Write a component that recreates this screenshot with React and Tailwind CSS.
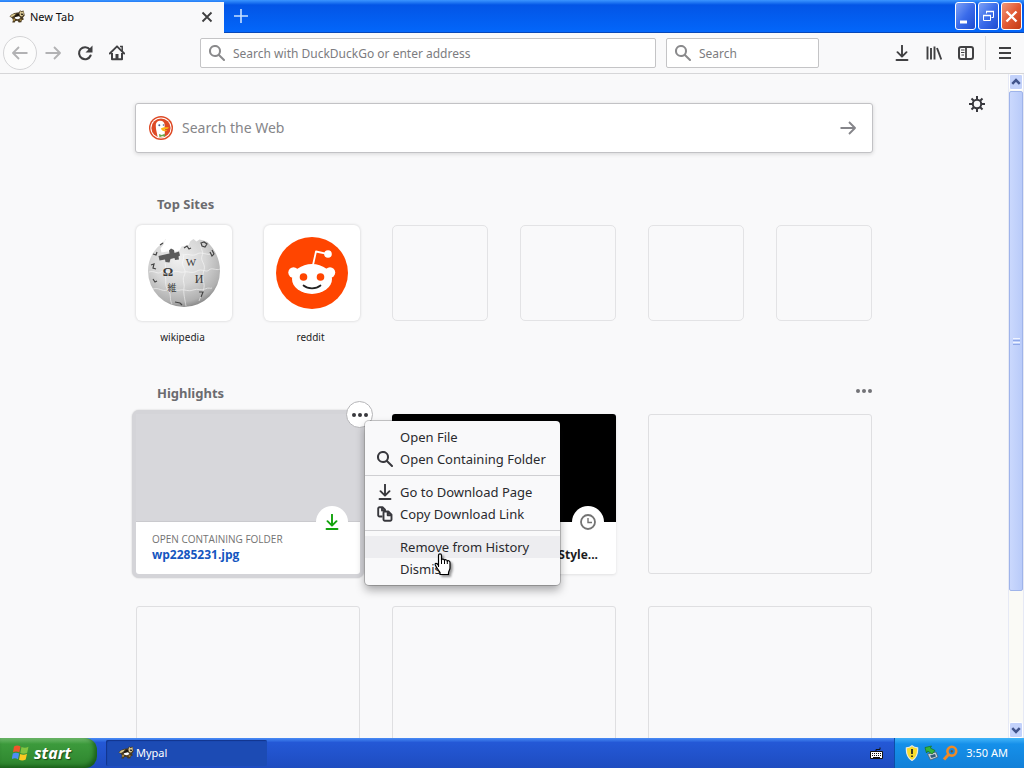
import React from "react";

function Svg({ size = 16, className = "", children, box = 16 }) {
  return (
    <svg width={size} height={size} viewBox={`0 0 ${box} ${box}`} className={`block shrink-0 ${className}`} fill="none" aria-hidden="true">
      {children}
    </svg>
  );
}

function SearchIcon({ className }) {
  return (
    <Svg className={className}>
      <path fill="currentColor" d="M15.707 14.293l-4.822-4.822a6.019 6.019 0 1 0-1.414 1.414l4.822 4.822a1 1 0 0 0 1.414-1.414zM6 10a4 4 0 1 1 4-4 4 4 0 0 1-4 4z" />
    </Svg>
  );
}

function ArrowIcon({ className }) {
  return (
    <Svg className={className}>
      <path d="M0.5 8H15M9 2l6 6-6 6" stroke="currentColor" strokeWidth="1.8" strokeLinejoin="round" />
    </Svg>
  );
}

function DownloadIcon({ className, size = 16 }) {
  return (
    <Svg className={className} size={size}>
      <path d="M8 0.5v11M3.500 7.200l4.500 4.500 4.500-4.500" stroke="currentColor" strokeWidth="1.900" strokeLinejoin="round" strokeLinecap="round" />
      <path d="M2.500 15h11" stroke="currentColor" strokeWidth="1.900" strokeLinecap="round" />
    </Svg>
  );
}

function CopyIcon({ className }) {
  return (
    <Svg className={className}>
      <path d="M5.500 10.500H2.500A1.300 1.300 0 0 1 1.200 9.200V2.500A1.300 1.300 0 0 1 2.500 1.200H5.500L8 3.700V5M5 1.200V4.500H8" stroke="currentColor" strokeWidth="1.900" strokeLinejoin="round" />
      <path d="M7.800 5.500H11.300L14.500 8.700V13.500a1.300 1.300 0 0 1-1.300 1.300H7.800a1.300 1.300 0 0 1-1.300-1.300V6.800A1.300 1.300 0 0 1 7.800 5.500zM10.700 5.500V9.300H14.500" stroke="currentColor" strokeWidth="1.900" strokeLinejoin="round" />
    </Svg>
  );
}

function DotsIcon({ className }) {
  return (
    <Svg className={className}>
      <circle cx="2" cy="8" r="2" fill="currentColor" />
      <circle cx="8" cy="8" r="2" fill="currentColor" />
      <circle cx="14" cy="8" r="2" fill="currentColor" />
    </Svg>
  );
}

function MypalIcon() {
  return (
    <Svg>
      <path d="M0.500 7.500L2.500 5.500l3-1.500 4.500-.8 1.200-2 1 1 2.300-.700.700 2.500 0.500 2.500-1.700 2 .8 2-2 .800-.4 2-2.600.200-1.300-1.700-2 .200-.8 1.500H3.300l.7-2.500-1-2z" fill="#4a3b22" />
      <path d="M1 7.500L3.200 5.600 7 4.600 5.500 6.600 3 8z" fill="#d6c68c" />
      <path d="M5.500 7l3-2.300L11 5 9.500 7 6.500 8z" fill="#1a150e" />
      <path d="M11.200 2l1.300 1.300 2-1 .3 3.200-1.800 2-1.800-.5-.8-2z" fill="#dfcd98" />
      <path d="M5.800 8.300L10 7.300l1.500 1.700-2.500 1.200-2.700-.5z" fill="#fff" />
      <path d="M11.800 4.500l2.500.300-.500 1.200-1.800-.2z" fill="#1a150e" />
      <path d="M4 10l2-.500v2l-1.600.7zM10.500 10.500l2-.5-.2 1.800-1.300.2z" fill="#a88942" />
    </Svg>
  );
}

function DuckIcon() {
  return (
    <Svg size={24} box={24}>
      <circle cx="12" cy="12" r="12" fill="#de4a26" />
      <circle cx="12" cy="12" r="10.600" fill="#fff" />
      <circle cx="12" cy="12" r="9.600" fill="#de4a26" />
      <path d="M8.600 20.900C8 17 6.800 13.500 6.800 10c-.3-3 1.200-4.700 3.700-5.200 3-.4 5.300 1.400 5.200 4.700-.1 2.200-.3 3.500.2 6.500l-.5 4.500a9.600 9.600 0 0 1-6.800.4z" fill="#fff" />
      <path d="M12 12.300c1.800-1.200 5-1.500 8-.8-1 1.700-3.500 1.500-5 2 1.200.9 2.600.9 3.400.8-1.400 1.700-6.200 1.500-6.400-2z" fill="#fdb515" />
      <path d="M10 18l2.800 1 2.900-1.200.4 2.600-2.900-.2-2.800 1z" fill="#6aa84a" />
      <circle cx="10.300" cy="9.300" r="1" fill="#4a5f8e" />
      <circle cx="14.500" cy="9" r=".8" fill="#4a5f8e" />
    </Svg>
  );
}

function WikipediaLogo() {
  return (
    <Svg size={74} box={74}>
      <defs>
        <radialGradient id="globe" cx="42%" cy="30%" r="74%">
          <stop offset="0" stopColor="#f0f0f0" />
          <stop offset=".5" stopColor="#d6d6d6" />
          <stop offset=".85" stopColor="#b0b0b0" />
          <stop offset="1" stopColor="#7c7c7c" />
        </radialGradient>
      </defs>
      <path d="M19 3.500l-6.500 6C5 16 1 25 1 35a36 36 0 0 0 72 0c0-12-5-21.500-12.500-29l-4-1.500-4-1-3 2-3-2.500-3 2-2 4-7 1.500-2 4-6 1.500-6-.5-6 1-1-4 3-4 1.500-5z" fill="url(#globe)" />
      <path d="M11.500 20l8.500-2 2.500-.5-.5-3 2-2 3 1.500.5 3L32 15.500l1 4-1.500 1 .5 3-4 .5-.5-2-4 1-1 3.500-4-.5-.5-2.500-5.500 1z" fill="#5c5c5c" />
      <g stroke="#fff" strokeWidth=".8" opacity=".65">
        <path d="M36 18c2 5-2 8 0 12s3 6 1 10 1 8 0 12 1 12 2 18" />
        <path d="M2 36c6-2 8 3 12 0s8 2 12 0 7 1 11 0 8 2 13-1 9 2 12-1 7 1 11-1" />
        <path d="M6 53c6-2 9 3 14 1s8 1 13 0 8 2 13 0 8 1 12-1 5 0 7-1" />
        <path d="M18 27c2 6-2 8 0 13s-1 9 3 14 1 9 4 14M54 8c-1 5 3 7 1 12s4 8 2 14-1 9 0 14-3 11-5 17" />
        <path d="M37 19c5-2 8 2 13-1s9 2 18 0" />
      </g>
      <g fill="#3a3a3a" fontFamily="Liberation Serif, serif" textAnchor="middle">
        <text x="21" y="40" fontSize="13" fontWeight="700">Ω</text>
        <text x="44" y="30" fontSize="11">W</text>
        <text x="52" y="47" fontSize="12">И</text>
        <text x="25" y="55" fontSize="9" fontFamily="Noto Sans CJK JP, sans-serif">維</text>
      </g>
      <g stroke="#444" strokeWidth="1.200">
        <path d="M37 12l3-2 2 3 2-1M54 7l3-1 3 2-2 3-3-1zM63 16l2 4 2-2-2-4M4 29l3-1-1 4 3 1M6 43l2 3 2-1M13 9l3-2M6 18l3 1 1-3M28 66l5 1 2 2M52 56h4l-2 5" />
      </g>
    </Svg>
  );
}

function RedditLogo() {
  return (
    <Svg size={72} box={72}>
      <circle cx="36" cy="36" r="36" fill="#ff4500" />
      <path d="M37 28l3-13.500 11 2.300" stroke="#fff" strokeWidth="1.800" strokeLinejoin="round" />
      <circle cx="52" cy="17" r="3.800" fill="#fff" />
      <circle cx="17.500" cy="35.500" r="5.200" fill="#fff" />
      <circle cx="54" cy="35.500" r="5.200" fill="#fff" />
      <ellipse cx="36" cy="42" rx="20" ry="15" fill="#fff" />
      <circle cx="27.500" cy="40" r="3.800" fill="#ff4500" />
      <circle cx="44.500" cy="40" r="3.800" fill="#ff4500" />
      <path d="M27.500 48.500c4.500 3.800 12.500 3.800 17 0" stroke="#222" strokeWidth="1.700" strokeLinecap="round" />
    </Svg>
  );
}

function TitleBar() {
  const frame = "flex h-7 w-[21px] items-center justify-center rounded-[3px] border border-white";
  return (
    <header className="flex h-[33px] shrink-0 items-start justify-between bg-linear-to-b from-[#3b95ff] via-[#0355e6] via-15% to-[#0367fb] shadow-[inset_0_-1px_0_#0747b8]">
      <div className="flex items-start pt-0.5">
        <div className="flex h-[31px] w-56 items-center bg-[#f9f9fa] pr-[11px] pb-px pl-[9px]">
          <MypalIcon />
          <span className="flex-1 pl-[5px] text-[11px] text-[#0c0c0d]">New Tab</span>
          <button aria-label="Close tab" className="text-[#3f3f40]">
            <Svg size={12}>
              <path d="M2 2l12 12M14 2L2 14" stroke="currentColor" strokeWidth="2.400" />
            </Svg>
          </button>
        </div>
        <button aria-label="New tab" className="flex h-7 w-[34px] items-center justify-center text-[#c8e0ff]">
          <Svg>
            <path d="M8 1v14M1 8h14" stroke="currentColor" strokeWidth="1.600" />
          </Svg>
        </button>
      </div>
      <div className="flex gap-0.5 pt-0.5 pr-0.5">
        <button aria-label="Minimize" className={`${frame} bg-linear-to-br from-[#7ea0f5] via-[#3a6bea] to-[#1c4bd0]`}>
          <Svg size={19} box={19}>
            <path d="M4 15h7" stroke="#fff" strokeWidth="3" />
          </Svg>
        </button>
        <button aria-label="Restore" className={`${frame} bg-linear-to-br from-[#7ea0f5] via-[#3a6bea] to-[#1c4bd0]`}>
          <Svg size={19} box={19}>
            <path d="M7.500 6.500V4.500h7v6h-2" stroke="#fff" />
            <path d="M7 4.500h8" stroke="#fff" strokeWidth="1.500" />
            <path d="M4.500 8.500h7v5h-7z" stroke="#fff" />
            <path d="M4 8.500h8" stroke="#fff" strokeWidth="1.500" />
          </Svg>
        </button>
        <button aria-label="Close" className={`${frame} bg-linear-to-br from-[#f0977a] via-[#e25a35] to-[#c23a12]`}>
          <Svg size={19} box={19}>
            <path d="M4.500 4.500l10 10M14.500 4.500l-10 10" stroke="#fff" strokeWidth="2.400" />
          </Svg>
        </button>
      </div>
    </header>
  );
}

function ToolbarField({ label, className }) {
  return (
    <label className={`flex h-[30px] items-center gap-2 rounded-xs border border-[#c4c4c6] bg-white px-2 ${className}`}>
      <SearchIcon className="text-[#8a8a8c]" />
      <input aria-label={label} placeholder={label} className="min-w-0 flex-1 bg-transparent pt-px text-xs text-[#0c0c0d] outline-none placeholder:text-[#7c7c80]" />
    </label>
  );
}

function Toolbar() {
  return (
    <nav className="flex h-[41px] shrink-0 items-center border-b border-[#d6d6d8] bg-[#f9f9fa] pr-[11px] pl-[3px] text-[#404042]">
      <button aria-label="Back" className="flex size-[34px] items-center justify-center rounded-full border border-[#d4d4d6] bg-[#fcfcfc] text-[#b2b2b4]">
        <ArrowIcon className="rotate-180" />
      </button>
      <div className="flex gap-4 pl-2">
        <button aria-label="Forward" className="text-[#b2b2b4]">
          <ArrowIcon />
        </button>
        <button aria-label="Reload">
          <Svg>
            <path d="M12.800 4.500A6 6 0 1 0 13.600 10.500" stroke="currentColor" strokeWidth="2.100" strokeLinecap="round" />
            <path d="M15.500 0.500v7h-7z" fill="currentColor" />
          </Svg>
        </button>
        <button aria-label="Home">
          <Svg>
            <path d="M0.800 8.500L8 1.300l7.200 7.200" stroke="currentColor" strokeWidth="1.800" strokeLinecap="round" strokeLinejoin="round" />
            <path d="M3 8v6.200h10V8" stroke="currentColor" strokeWidth="2" strokeLinejoin="round" />
            <path d="M6.500 9h3v5.500h-3z" fill="currentColor" />
            <path d="M11 1.500h2.200V6" stroke="currentColor" strokeWidth="1.500" />
          </Svg>
        </button>
      </div>
      <ToolbarField label="Search with DuckDuckGo or enter address" className="ml-[75px] flex-1" />
      <ToolbarField label="Search" className="mr-[75px] ml-2.5 w-[153px]" />
      <div className="flex gap-4">
        <button aria-label="Downloads">
          <DownloadIcon />
        </button>
        <button aria-label="Library">
          <Svg>
            <path d="M1.500 1.500v13M5 3v11.500M8.500 1.500v13" stroke="currentColor" strokeWidth="1.900" />
            <path d="M11 3l4.300 11.500" stroke="currentColor" strokeWidth="1.900" />
          </Svg>
        </button>
        <button aria-label="Sidebar">
          <Svg>
            <rect x="1" y="2" width="14" height="12" rx="2" stroke="currentColor" strokeWidth="2" />
            <path d="M8 2v12" stroke="currentColor" strokeWidth="1.800" />
            <path d="M3 5h3.500M3 7.500h3.500M3.500 10h2.500" stroke="currentColor" strokeWidth="1.100" />
          </Svg>
        </button>
      </div>
      <div className="ml-[11px] h-[34px] border-l border-[#dedee0]" />
      <button aria-label="Menu" className="ml-[11px]">
        <Svg>
          <path d="M2 3h12M2 8h12M2 13h12" stroke="currentColor" strokeWidth="2" />
        </Svg>
      </button>
    </nav>
  );
}

function HandCursor() {
  return (
    <svg width="18" height="23" viewBox="0 0 18 23" className="pointer-events-none absolute top-[132px] left-[69px] drop-shadow-[2px_2px_1px_rgba(0,0,0,0.400)]" aria-hidden="true">
      <path
        d="M4.500 13.500V2.500c0-2.300 3-2.300 3 0V7c0-1.300 3-1.300 3 .6 0-1.300 2.800-1.300 2.800.9 0-1.200 2.700-1.200 2.700 1V15c0 2-1.500 3-1.500 5v1.500H6V19.500c-1-2-3.200-4-4.700-7.500-.7-2 1.500-2.500 3.200.500z"
        fill="#fff"
        stroke="#000"
        strokeWidth="1.200"
        strokeLinejoin="round"
      />
      <path d="M7.500 6.500V11M10.500 7.500V11M13.300 8.500V11" stroke="#000" />
    </svg>
  );
}

function MenuItem({ icon, active, children }) {
  return (
    <button role="menuitem" className={`flex h-[22px] w-full items-center gap-[7px] px-3 text-left ${active ? "bg-[#ededf0]" : ""}`}>
      <span className="size-4 text-[#38383d]">{icon}</span>
      <span className="whitespace-nowrap">{children}</span>
    </button>
  );
}

function ContextMenu() {
  return (
    <div role="menu" className="absolute top-[7px] left-[229px] z-20 w-[195px] rounded-[4px] bg-[#f9f9fa] py-[5px] text-[13px] leading-[22px] text-[#2a2a2e] shadow-[0_0_0_1px_rgba(0,0,0,0.200),0_5px_10px_rgba(12,12,13,0.350)]">
      <MenuItem>Open File</MenuItem>
      <MenuItem icon={<SearchIcon />}>Open Containing Folder</MenuItem>
      <hr className="my-[5px] border-[#cfcfd2]" />
      <MenuItem icon={<DownloadIcon />}>Go to Download Page</MenuItem>
      <MenuItem icon={<CopyIcon />}>Copy Download Link</MenuItem>
      <hr className="my-[5px] border-[#cfcfd2]" />
      <MenuItem active>Remove from History</MenuItem>
      <MenuItem>Dismiss</MenuItem>
      <HandCursor />
    </div>
  );
}

function TopSites() {
  const sites = [
    { name: "wikipedia", logo: <WikipediaLogo /> },
    { name: "reddit", logo: <RedditLogo /> },
  ];
  return (
    <section className="mt-[41px]">
      <h2 className="pl-[21px] text-[13px] leading-5 font-bold text-[#6b6b6f]">Top Sites</h2>
      <div className="mt-[11px] grid grid-cols-6 gap-8">
        {sites.map((s) => (
          <a key={s.name} href={`#${s.name}`} className="text-center text-[10px] leading-4 text-[#1c1c1e]">
            <span className="flex h-24 items-center justify-center rounded-md bg-white shadow-[0_0_3px_rgba(12,12,13,0.180)]">{s.logo}</span>
            <span className="mt-2 block pr-[3px]">{s.name}</span>
          </a>
        ))}
        {[0, 1, 2, 3].map((i) => (
          <div key={i} className="h-24 rounded-[5px] border border-[#e3e3e5]" />
        ))}
      </div>
    </section>
  );
}

function CardBadge({ children }) {
  return <span className="absolute right-3 bottom-9 flex size-8 items-center justify-center rounded-full bg-white">{children}</span>;
}

function Highlights() {
  return (
    <section className="mt-[38px]">
      <div className="flex items-center justify-between pl-[21px]">
        <h2 className="text-[13px] leading-5 font-bold text-[#6b6b6f]">Highlights</h2>
        <button aria-label="Section options" className="pb-1 text-[#737377]">
          <DotsIcon />
        </button>
      </div>
      <div className="mt-[11px] grid grid-cols-3 gap-8">
        <article className="relative h-40 rounded-[3px] bg-white shadow-[0_0_0_4px_#d4d4d8,0_0_2px_4px_rgba(0,0,0,0.200)]">
          <div className="h-[108px] border-b border-[#cacace] bg-[#d7d7db]" />
          <CardBadge>
            <DownloadIcon className="text-[#12a30d]" />
          </CardBadge>
          <div className="px-4 pt-[9px]">
            <p className="font-['Open_Sans','Noto_Sans',sans-serif] text-[10px] leading-4 text-[#737373]">OPEN CONTAINING FOLDER</p>
            <a href="#file" className="block font-['Open_Sans','Noto_Sans',sans-serif] text-xs leading-4 font-bold text-[#1456c0]">
              wp2285231.jpg
            </a>
          </div>
          <button aria-label="Open menu" className="absolute -top-[13px] -right-[13px] flex size-[27px] items-center justify-center rounded-full border border-[#b5b5b8] bg-white text-[#38383d]">
            <DotsIcon />
          </button>
          <ContextMenu />
        </article>
        <article className="relative h-40 rounded-[3px] bg-white shadow-[0_1px_3px_rgba(12,12,13,0.100)]">
          <div className="h-[108px] rounded-t-[3px] bg-black" />
          <CardBadge>
            <Svg className="text-[#737373]">
              <circle cx="8" cy="8" r="7" stroke="currentColor" strokeWidth="1.800" />
              <path d="M8 4v4.500h4" stroke="currentColor" strokeWidth="1.400" />
            </Svg>
          </CardBadge>
          <a href="#visited" className="block pt-[25px] pr-[18px] text-right font-['Open_Sans','Noto_Sans',sans-serif] text-xs leading-4 font-bold text-[#1c1c1e]">
            Style...
          </a>
        </article>
        {[0, 1, 2, 3].map((i) => (
          <div key={i} className="h-40 rounded-[3px] border border-[#dfdfe1]" />
        ))}
      </div>
    </section>
  );
}

function Scrollbar() {
  const arrow = "flex h-4 w-full items-center justify-center rounded-[2px] border border-white bg-[#c3d2fb] text-[#41548c]";
  return (
    <div className="flex w-4 shrink-0 flex-col border-x border-[#e6e9f5] bg-[#fafaf6]">
      <button aria-label="Scroll up" className={arrow}>
        <Svg size={10}>
          <path d="M2 11l6-6 6 6" stroke="currentColor" strokeWidth="4" />
        </Svg>
      </button>
      <div className="flex flex-1 flex-col pt-px">
        <div className="flex flex-[500] flex-col items-center justify-center gap-px rounded-[2px] border border-[#9fb4ea] bg-linear-to-r from-[#cad8fd] to-[#b9cbf9]">
          <span className="h-px w-[7px] bg-[#eef3ff]" />
          <span className="h-px w-[7px] bg-[#8fa8e8]" />
          <span className="h-px w-[7px] bg-[#eef3ff]" />
          <span className="h-px w-[7px] bg-[#8fa8e8]" />
        </div>
        <div className="flex-[131]" />
      </div>
      <button aria-label="Scroll down" className={arrow}>
        <Svg size={10}>
          <path d="M2 5l6 6 6-6" stroke="currentColor" strokeWidth="4" />
        </Svg>
      </button>
    </div>
  );
}

function Taskbar() {
  return (
    <footer className="flex h-[30px] shrink-0 items-stretch bg-linear-to-b from-[#4a8cf5] via-[#2458d6] via-15% to-[#1e4cc0] text-[11px] text-white">
      <button className="flex w-[97px] items-center gap-1 rounded-r-xl bg-linear-to-b from-[#6fbb6c] via-[#3c9a3c] via-20% to-[#2d842d] pl-3 shadow-[inset_-3px_-2px_4px_rgba(0,50,0,0.500)]">
        <Svg size={18} box={18}>
          <path d="M2 2.500c2.500-1.500 4.500-1 6.500 0L7.300 8.300c-2-1-4-1.300-6.300 0z" fill="#f0552b" />
          <path d="M9.500 3c2.500 1 4.500 1 7-.3l-1.300 6c-2.500 1.200-4.500 1.200-6.900.2z" fill="#83c441" />
          <path d="M.8 9.500c2.300-1.300 4.300-1 6.300 0L6 15.200c-2-1-4-1.200-6.300 0z" fill="#4d8df5" />
          <path d="M8.200 10c2.400 1 4.400 1 6.800-.2l-1.300 5.800c-2.400 1.200-4.400 1.100-6.700.2z" fill="#fbc922" />
        </Svg>
        <span className="text-[16px] font-bold text-white italic [text-shadow:1px_1px_1px_rgba(0,0,0,0.500)]">start</span>
      </button>
      <div className="flex flex-1 items-center pl-[9px]">
        <button className="flex h-[26px] w-[161px] items-center gap-0.5 rounded-[2px] bg-[#1c4bb4] pl-3 shadow-[inset_1px_1px_1px_#12358c]">
          <MypalIcon />
          <span>Mypal</span>
        </button>
      </div>
      <div className="flex w-9 items-center justify-center">
        <Svg>
          <path d="M2.500 6.500h12v7h-12z" fill="#fff" stroke="#111" />
          <path d="M4 8.500h9.500M4 10.500h9.500" stroke="#111" strokeDasharray="1 1" />
          <path d="M5 12.500h7" stroke="#111" />
          <path d="M8 6V4.500h4V2.500" stroke="#111" />
        </Svg>
      </div>
      <div className="flex items-center gap-[3px] border-l border-[#0c4fa8] bg-linear-to-b from-[#3fb4f8] via-[#1590ea] via-20% to-[#1280d8] pr-4 pl-[9px]">
        <Svg>
          <path d="M8 .8c1.800 1.500 3.700 2 5.600 2 .4 5.500-1.100 10.200-5.600 12.700C3.500 13 2 8.300 2.400 2.800 4.300 2.800 6.200 2.300 8 .8z" fill="#f9dc2c" stroke="#e8e8e0" strokeWidth="1.200" />
          <path d="M8 4v5M8 10.500V12" stroke="#222" strokeWidth="1.700" />
        </Svg>
        <Svg>
          <path d="M4.500 9l8.500-2 2 5-7.500 3z" fill="#c9d2d6" stroke="#48606c" strokeWidth=".8" />
          <path d="M7 10.500l5-1.500 1 2.500-4.500 1.500z" fill="#335a78" />
          <path d="M2 2.500L8.500 1 7.300 3 12 5.500 9 9 4.800 6 3.500 8z" fill="#35b53c" stroke="#17701c" strokeWidth=".7" />
        </Svg>
        <Svg>
          <circle cx="9.800" cy="6.200" r="4.400" stroke="#ef8a26" strokeWidth="2.600" />
          <path d="M6.500 9.500L2 14.500" stroke="#ef8a26" strokeWidth="3" />
          <path d="M8.500 6.200h2.600M9.800 5v2.600" stroke="#8a4a12" />
        </Svg>
        <time className="pl-[5px]">3:50 AM</time>
      </div>
    </footer>
  );
}

export default function App() {
  return (
    <div className="flex h-screen flex-col overflow-hidden bg-[#f9f9fa] font-['Noto_Sans','Open_Sans',sans-serif]">
      <TitleBar />
      <Toolbar />
      <div className="flex min-h-0 flex-1">
        <main className="relative min-w-0 flex-1 overflow-hidden">
          <button aria-label="Customize page" className="absolute top-[22px] right-[23px] text-[#38383d]">
            <Svg>
              <circle cx="8" cy="8" r="4.200" stroke="currentColor" strokeWidth="2" />
              <path d="M8 0v3.500M8 12.500V16M0 8h3.500M12.500 8H16M2.500 2.500l2.300 2.300M11.200 11.200l2.300 2.300M13.500 2.500l-2.300 2.300M4.800 11.200l-2.300 2.300" stroke="currentColor" strokeWidth="2" />
            </Svg>
          </button>
          <div className="mx-auto max-w-[736px] pt-[29px]">
            <form className="-mx-px flex h-[50px] items-center rounded-[3px] border border-[#c2c2c5] bg-white pr-4 pl-[13px] shadow-[0_1px_4px_rgba(12,12,13,0.150)]">
              <DuckIcon />
              <input aria-label="Search the Web" placeholder="Search the Web" className="min-w-0 flex-1 bg-transparent pl-[9px] text-sm outline-none placeholder:text-[#858589]" />
              <button type="button" aria-label="Submit search" className="text-[#85858a]">
                <ArrowIcon />
              </button>
            </form>
            <TopSites />
            <Highlights />
          </div>
        </main>
        <Scrollbar />
      </div>
      <Taskbar />
    </div>
  );
}
